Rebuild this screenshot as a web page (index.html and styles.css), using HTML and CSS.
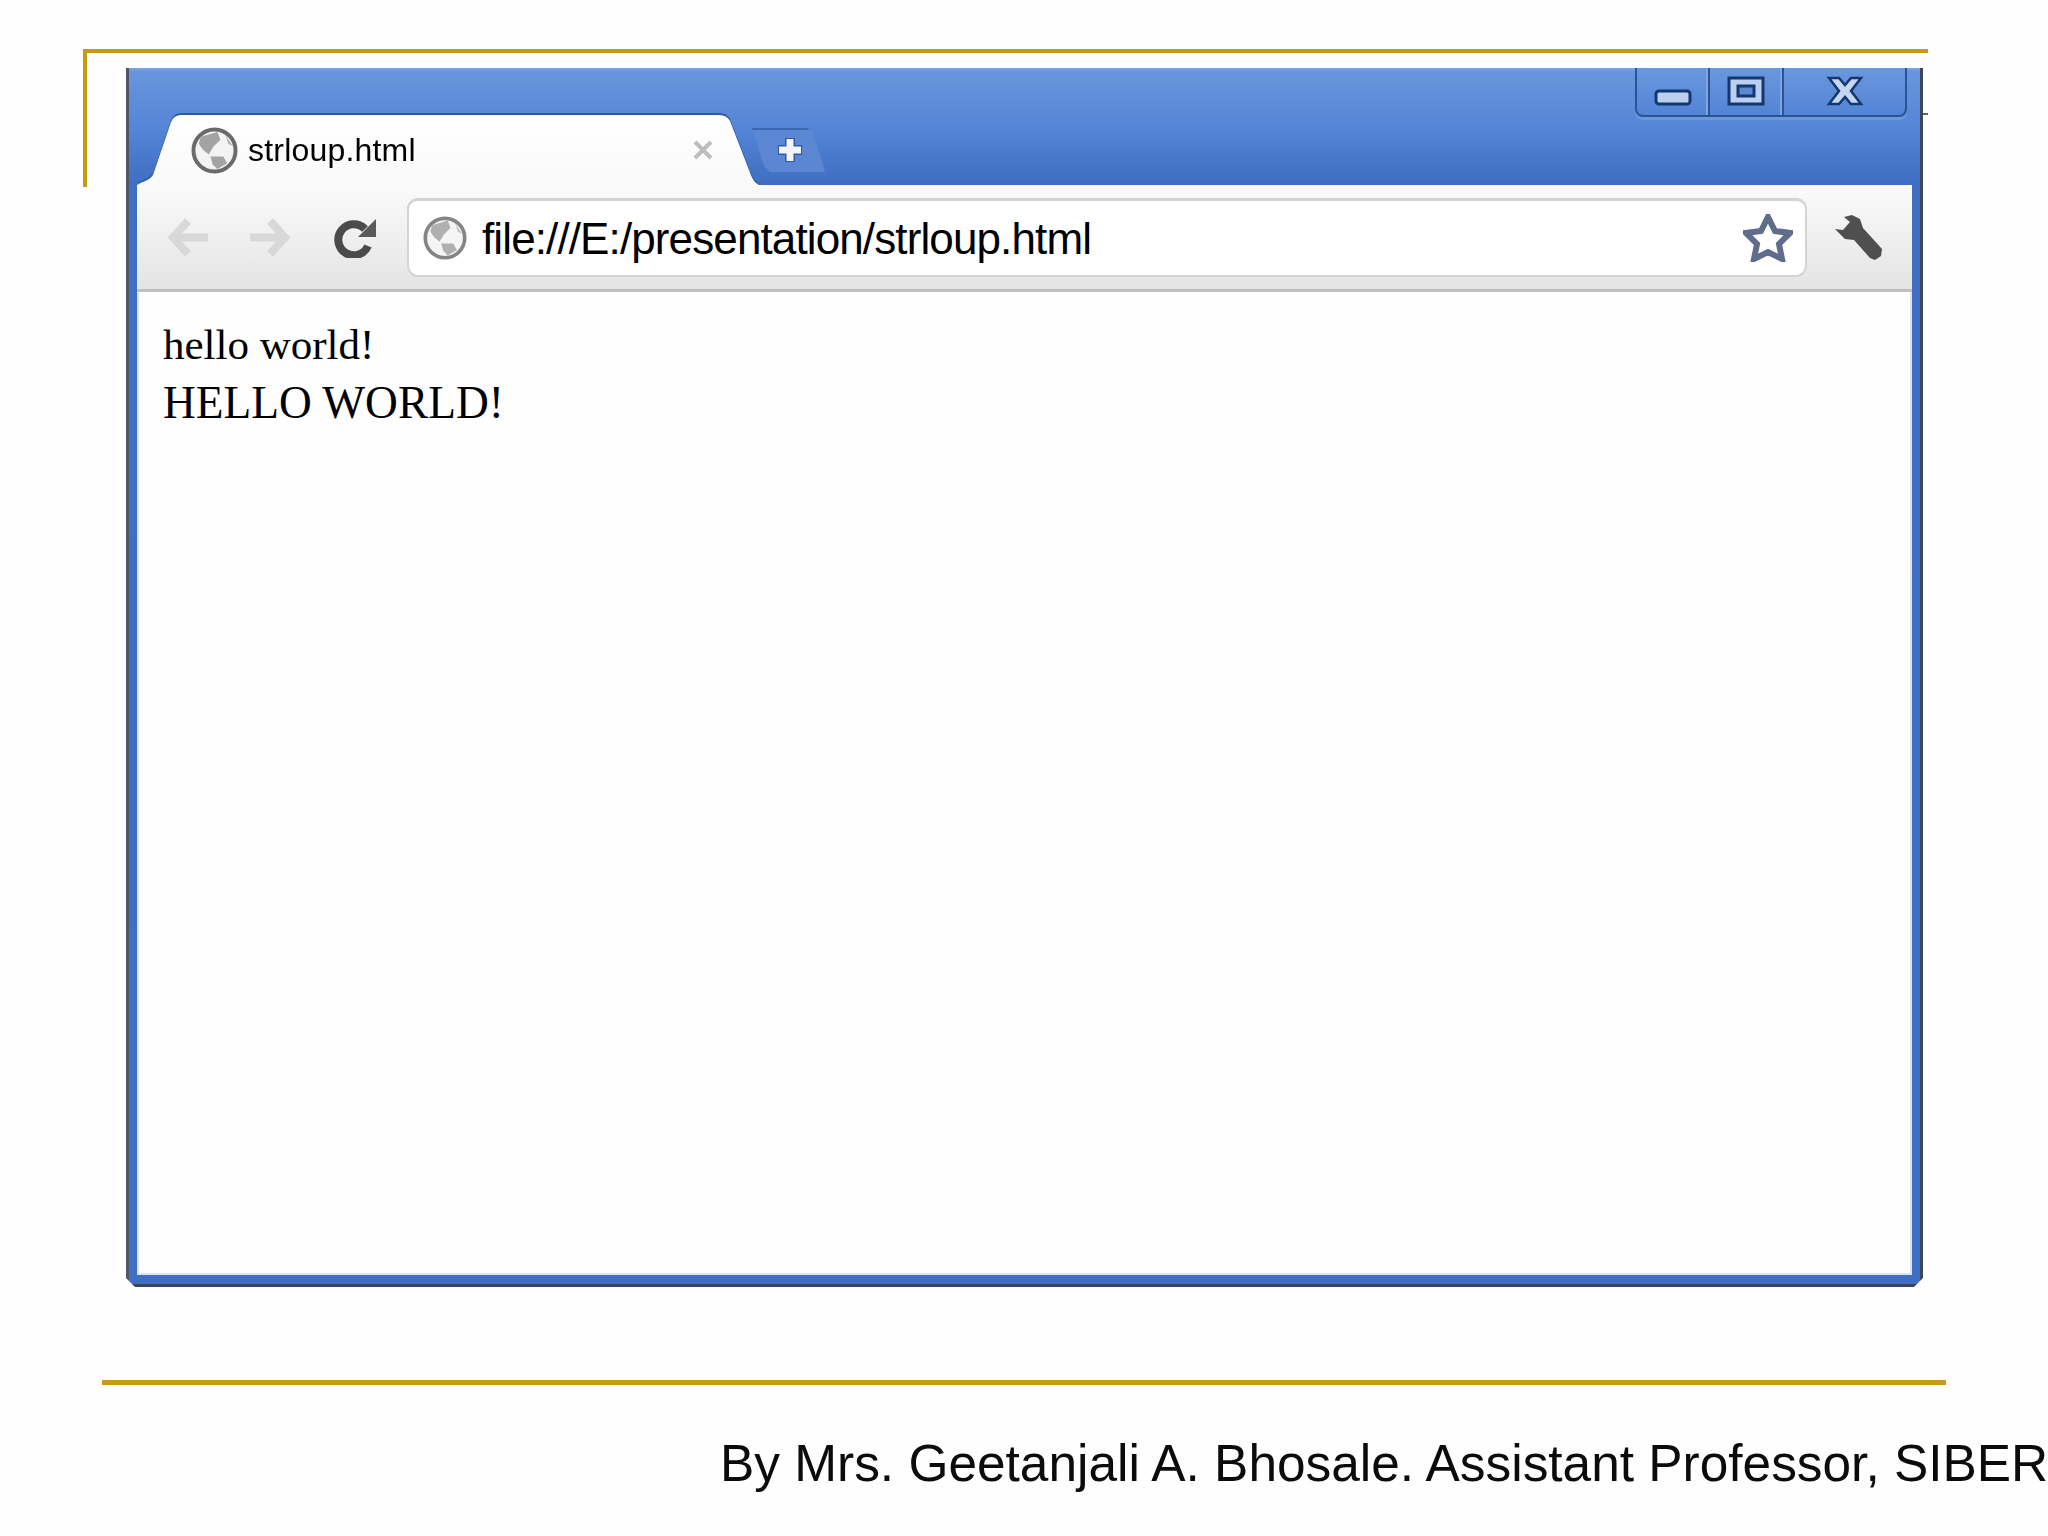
FILE: index.html
```html
<!DOCTYPE html>
<html lang="en">
<head>
<meta charset="utf-8">
<title>strloup.html</title>
<link rel="stylesheet" href="styles.css">
</head>
<body>
<div class="slide">
  <div class="stage">
    <div class="corner"></div>
    <div class="tick"></div>
    <div class="window">
      <div class="tabstrip">
        <div class="tab-wrap">
          <div class="tab">
            <svg class="globe-tab" viewBox="0 0 48 48"><circle cx="24" cy="24" r="21.5" fill="#f3f3f3" stroke="#6a6a6a" stroke-width="4"/><path d="M10 10L27 5L30 13L23 20L18 28L12 23L8 17Z" fill="#a3a3a3"/><path d="M20 30L33 30L37 37L27 43L22 38Z" fill="#a3a3a3"/><path d="M35 8L43 20L38 17Z" fill="#b5b5b5"/></svg>
            <span class="tab-title">strloup.html</span>
            <svg class="tab-close" viewBox="0 0 22 22"><path d="M3 3L19 19M19 3L3 19" stroke="#bdbdbd" stroke-width="4"/></svg>
          </div>
        </div>
        <div class="newtab">
          <svg class="plus" viewBox="0 0 26 26"><path d="M13 1V25M1 13H25" stroke="#2f5a9f" stroke-width="10"/><path d="M13 2V24M2 13H24" stroke="#f4f4f8" stroke-width="7"/></svg>
        </div>
        <div class="controls">
          <div class="ctl ctl-min"><svg class="ctl-icon" viewBox="0 0 38 30"><rect x="2" y="15" width="34" height="13" rx="3" fill="#bccfef" stroke="#12386f" stroke-width="3"/></svg></div>
          <div class="ctl ctl-max"><svg class="ctl-icon" viewBox="0 0 38 30"><rect x="2" y="2" width="34" height="26" fill="#bccfef" stroke="#12386f" stroke-width="3"/><rect x="11" y="10" width="16" height="10" fill="#5b87d3" stroke="#12386f" stroke-width="3"/></svg></div>
          <div class="ctl ctl-close"><svg class="ctl-icon" viewBox="0 0 38 30"><path d="M3 2H13L19 9L25 2H35L25 15L35 28H25L19 21L13 28H3L13 15Z" fill="#c5d6f0" stroke="#12386f" stroke-width="2.5"/></svg></div>
        </div>
      </div>
      <div class="toolbar">
        <svg class="nav-arrow" viewBox="0 0 40 39"><path d="M20 3L5 19.5L20 36M6 19.5H40" fill="none" stroke="#d8d8d8" stroke-width="8"/></svg>
        <svg class="nav-arrow" viewBox="0 0 40 39"><path d="M20 3L35 19.5L20 36M34 19.5H0" fill="none" stroke="#d8d8d8" stroke-width="8"/></svg>
        <svg class="reload" viewBox="0 0 43 41"><path d="M32 12A15.500 15.500 0 1 0 35 29" fill="none" stroke="#4b4b4b" stroke-width="8"/><path d="M43 2V20H25Z" fill="#5a5a5a"/></svg>
        <div class="omnibox">
          <svg class="globe-url" viewBox="0 0 48 48"><circle cx="24" cy="24" r="21.500" fill="#f5f5f5" stroke="#858585" stroke-width="4"/><path d="M10 10L27 5L30 13L23 20L18 28L12 23L8 17Z" fill="#b0b0b0"/><path d="M20 30L33 30L37 37L27 43L22 38Z" fill="#b0b0b0"/><path d="M35 8L43 20L38 17Z" fill="#c0c0c0"/></svg>
          <span class="url">file:///E:/presentation/strloup.html</span>
          <svg class="star" viewBox="0 0 50 48"><path d="M25 3L32 17L47 19L36 30L39 45L25 38L11 45L14 30L3 19L18 17Z" fill="#fff" stroke="#5f6d8a" stroke-width="6"/></svg>
        </div>
        <svg class="wrench" viewBox="0 0 48 45"><path d="M0 14L8 15L15 7L9 2L17 0L25 4L28 13L47 34L46 41L40 45L35 43L19 25L10 24Z" fill="#4f4f4f"/></svg>
      </div>
      <div class="page">
        <div class="line-small">hello world!</div>
        <div class="line-large">HELLO WORLD!</div>
      </div>
    </div>
  </div>
  <div class="rule"></div>
  <div class="footer">By Mrs. Geetanjali A. Bhosale. Assistant Professor, SIBER</div>
</div>
</body>
</html>
```
FILE: styles.css
```css
* { box-sizing: border-box; }
html, body { margin: 0; padding: 0; background: #fff; }
.slide {
  width: 2048px;
  height: 1536px;
  overflow: hidden;
  display: flex;
  flex-direction: column;
  padding-top: 49px;
  background: #fefefe;
}
.stage {
  display: grid;
  width: 1845px;
  margin-left: 83px;
}
.corner {
  grid-area: 1 / 1;
  align-self: start;
  height: 138px;
  border-top: 4px solid #c79a10;
  border-left: 4px solid #c79a10;
}
.tick {
  grid-area: 1 / 1;
  align-self: start;
  justify-self: end;
  width: 5px;
  height: 2px;
  margin-top: 64px;
  background: #666;
}
.window {
  grid-area: 1 / 1;
  margin: 19px 5px 0 43px;
  width: 1797px;
  height: 1219px;
  display: flex;
  flex-direction: column;
  padding: 0 8px 9px;
  border-left: 3px solid #4f5666;
  border-right: 3px solid #3f4655;
  border-bottom: 3px solid #39445c;
  background: linear-gradient(180deg, #80a6e3 0, #6896dd 3px, #5585d6 60px, #3f6ec2 117px, #3e6fc3 100%);
  clip-path: polygon(0 0, 100% 0, 100% calc(100% - 9px), calc(100% - 9px) 100%, 9px 100%, 0 calc(100% - 9px));
}
.tabstrip {
  height: 117px;
  flex: none;
  display: flex;
  align-items: flex-end;
}
.tab-wrap {
  flex: none;
  filter: drop-shadow(0 -2px 0 #2e5ba8);
}
.tab {
  width: 622px;
  height: 70px;
  display: flex;
  align-items: center;
  padding: 0 45px 0 54px;
  background: linear-gradient(180deg, #fff, #f9f9f9);
  clip-path: path("M0 70C6 66 12 66 16 60L34 7Q37 0 44 0L582 0Q590 0 593 6L612 55C615 64 618 68 622 70Z");
}
.globe-tab { width: 47px; height: 47px; flex: none; }
.tab-title {
  margin-left: 10px;
  font: 32px/40px "Liberation Sans", Arial, sans-serif;
  letter-spacing: 0.2px;
  color: #000;
}
.tab-close { width: 22px; height: 22px; margin-left: auto; flex: none; }
.newtab {
  flex: none;
  width: 73px;
  height: 44px;
  margin: 0 0 13px -7px;
  padding-left: 3px;
  display: flex;
  align-items: center;
  justify-content: center;
  background: linear-gradient(180deg, #3a66b4 0 2px, #5c87d3 2px, #5a86d3 100%);
  clip-path: polygon(0 0, 55px 0, 61px 4px, 73px 44px, 18px 44px, 12px 38px);
}
.plus { width: 26px; height: 26px; }
.controls {
  align-self: flex-start;
  margin-left: auto;
  margin-right: 5px;
  display: flex;
  height: 49px;
  border: 2px solid #2b5395;
  border-top: 0;
  border-radius: 0 0 8px 8px;
  background: linear-gradient(180deg, #6a98de, #5384d5);
  box-shadow: 0 3px 0 #6e98dc;
}
.ctl {
  display: flex;
  justify-content: center;
  padding-top: 8px;
  border-right: 2px solid #2b5395;
  box-shadow: inset -2px 0 0 #7ea4e2;
}
.ctl-min { width: 73px; }
.ctl-max { width: 74px; }
.ctl-close { width: 121px; border-right: 0; box-shadow: none; }
.ctl-icon { width: 38px; height: 30px; }
.toolbar {
  flex: none;
  height: 107px;
  display: flex;
  align-items: center;
  padding: 0 0 0 31px;
  border-bottom: 3px solid #bfbfbf;
  background: linear-gradient(180deg, #fbfbfb, #e5e4e4);
}
.nav-arrow { width: 40px; height: 39px; flex: none; margin-right: 42px; }
.reload { width: 43px; height: 41px; flex: none; margin-left: 1px; margin-right: 31px; }
.omnibox {
  flex: none;
  width: 1400px;
  height: 79px;
  display: flex;
  align-items: center;
  padding: 0 12px 0 14px;
  background: #fff;
  border: 2px solid #d4d4d4;
  border-top-width: 3px;
  border-radius: 11px;
}
.globe-url { width: 44px; height: 44px; flex: none; }
.url {
  margin-left: 15px;
  padding-top: 3px;
  font: 44px/54px "Liberation Sans", Arial, sans-serif;
  letter-spacing: -0.88px;
  color: #000;
}
.star { width: 50px; height: 48px; margin-left: auto; flex: none; }
.wrench { width: 48px; height: 45px; flex: none; margin-left: 28px; }
.page {
  flex: 1;
  padding: 24px 24px 0;
  background: #fefefe;
  border: 2px solid #dde2ec;
  border-top: 0;
  color: #000;
  font-family: "Liberation Serif", "Times New Roman", serif;
}
.line-small { font-size: 43px; line-height: 58px; }
.line-large { font-size: 45.4px; line-height: 59px; }
.rule {
  flex: none;
  width: 1844px;
  height: 5px;
  margin: 93px 0 0 102px;
  background: #c99b14;
}
.footer {
  margin: 45px 0 0 720px;
  font: 51.4px/66px "Liberation Sans", Arial, sans-serif;
  color: #0b0b0b;
  white-space: nowrap;
}
```
